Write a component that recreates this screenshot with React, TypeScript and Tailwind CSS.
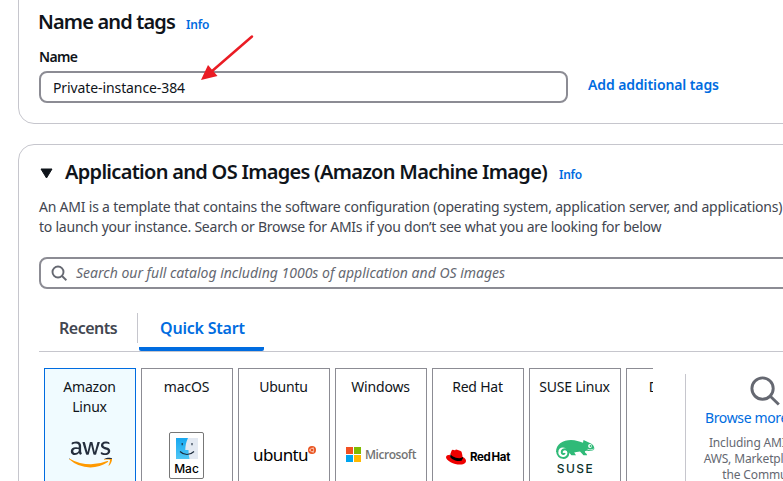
import type { ReactNode } from "react";
import { FaAws, FaRedhat } from "react-icons/fa6";

const SearchIcon = ({ size, stroke }: { size: number; stroke: number }) => (
  <svg width={size} height={size} viewBox="0 0 16 16" fill="none" stroke="#656871" strokeWidth={stroke} className="block shrink-0">
    <circle cx="7" cy="7" r="5.5" />
    <path d="M11 11l4.4 4.2" />
  </svg>
);

const AwsLogo = () => (
  <svg width="43" height="27" viewBox="0 0 43 27" className="block">
    <defs>
      <linearGradient id="aws" gradientUnits="userSpaceOnUse" x1="0" y1="0" x2="0" y2="512">
        <stop offset="0.62" stopColor="#252f3e" />
        <stop offset="0.62" stopColor="#ff9900" />
      </linearGradient>
    </defs>
    <FaAws x="0" y="-8" size="43" style={{ fill: "url(#aws)" }} />
  </svg>
);

const MacLogo = () => (
  <div className="mt-px -ml-px flex h-[47px] w-[35px] flex-col items-center rounded-[2px] border border-[#777] bg-white pt-[5px]">
    <svg width="22" height="21" viewBox="0 0 22 21" className="block shrink-0">
      <defs>
        <linearGradient id="face" x1="0" y1="0" x2="0" y2="1">
          <stop offset="0" stopColor="#18a8f0" />
          <stop offset="1" stopColor="#4fc6f5" />
        </linearGradient>
      </defs>
      <rect width="22" height="21" fill="url(#face)" />
      <path d="M12 0C10 4 9.4 8 9.3 12h3.2c0 3 .2 6 1 9H22V0z" fill="#e3e9f2" />
      <path d="M6.200 5v2.200M16 5v2.200" stroke="#1c2b3c" strokeWidth="1.1" />
      <path d="M4 13.500c4 4 10 4 14 0" stroke="#1c2b3c" strokeWidth="1.1" fill="none" />
    </svg>
    <span className="mt-[3px] font-['Inter',sans-serif] text-[12px] leading-[14px] font-medium text-black">Mac</span>
  </div>
);

const UbuntuLogo = () => (
  <div className="ml-px flex items-start">
    <span className="font-['Noto_Sans',sans-serif] text-[17px] leading-[20px] tracking-[-0.6px] text-black">ubuntu</span>
    <svg width="8" height="8" viewBox="0 0 16 16" className="mt-[1px] block">
      <circle cx="8" cy="8" r="8" fill="#e95420" />
      <circle cx="8" cy="8" r="3.6" fill="none" stroke="#fff" strokeWidth="1.1" />
      <g fill="#fff"><circle cx="3.600" cy="8" r="1.2" /><circle cx="10.200" cy="4.200" r="1.2" /><circle cx="10.200" cy="11.800" r="1.2" /></g>
    </svg>
  </div>
);

const MicrosoftLogo = () => (
  <div className="flex items-center gap-[4px]">
    <div className="grid grid-cols-2 gap-px">
      <i className="size-[7px] bg-[#f25022]" />
      <i className="size-[7px] bg-[#7fba00]" />
      <i className="size-[7px] bg-[#00a4ef]" />
      <i className="size-[7px] bg-[#ffb900]" />
    </div>
    <span className="font-['Open_Sans',sans-serif] text-[12px] leading-[16px] font-semibold tracking-[-0.45px] text-[#737373]">Microsoft</span>
  </div>
);

const RedHatLogo = () => (
  <div className="mt-[4px] flex items-center gap-[4px]">
    <svg width="20" height="16" viewBox="0 0 20 16" className="block">
      <path d="M4 5.500l1 4 6 3 6-.5V8z" fill="#000" />
      <FaRedhat x="0" y="-2" size="20" style={{ fill: "#e00" }} />
      <path d="M4.500 7.200c2 3 7.500 4.800 11.300 3.600" stroke="#000" strokeWidth="1.700" fill="none" />
    </svg>
    <span className="font-['Inter',sans-serif] text-[11.5px] leading-[14px] font-bold tracking-[-0.3px] [word-spacing:-1.5px] text-black">Red Hat</span>
  </div>
);

const SuseLogo = () => (
  <div className="mt-[5px] flex flex-col items-center">
    <svg width="39" height="20" viewBox="0 0 39 20" className="block">
      <path d="M0 13C0 5 7 1 15 1c5 0 8 1.500 12 2.800L27.500 1 35 4.500c2 1 3.500 3 3.300 5.500-1 1.800-4 2.300-7 1.800-2.300-.3-3 .5-2 2 .8 1 1.700 1 1.700 2.500h-3.500L24 12.500c-2.500.5-4.500.5-5.800 1L20 16.200h-4.500L12.500 13C10 8 4 8 3 13z" fill="#30ba78" />
      <circle cx="6.800" cy="13" r="4.500" fill="#fff" />
      <path d="M1.200 12.500c0 8 11 8.500 11.200 1.500.1-4.500-6.500-5-6.700-.8 0 2 2.500 2.400 3 .8" stroke="#30ba78" strokeWidth="2" fill="none" />
      <circle cx="34" cy="7" r="1.900" fill="#fff" />
      <circle cx="34.500" cy="7" r=".9" fill="#30ba78" />
      <path d="M31.500 10.300c2 .7 4.500.6 6.200-.3" stroke="#fff" strokeWidth=".7" fill="none" />
    </svg>
    <span className="mt-[3px] pl-[1px] font-['Inter',sans-serif] text-[12px] leading-[13px] font-medium tracking-[1.5px] text-[#0c322c]">SUSE</span>
  </div>
);

const Tile = ({ label, active, children }: { label: ReactNode; active?: boolean; children?: ReactNode }) => (
  <div className={`flex h-[140px] w-[92px] shrink-0 flex-col items-center border pt-[8px] ${active ? "border-[#006ce0] bg-[#f0fbff]" : "border-[#8c8c94] bg-white"}`}>
    <div className="h-[40px] pr-px text-center text-[14px] leading-[20px] tracking-[-0.2px] whitespace-nowrap">{label}</div>
    <div className="flex h-[75px] items-center justify-center">{children}</div>
  </div>
);

export default function App() {
  return (
    <div className="relative h-[481px] w-[783px] overflow-hidden bg-white font-['Noto_Sans',sans-serif] text-[#0f141a]">
      <div className="flex w-[1100px] flex-col gap-[20px] pl-[18px]">
        <section className="-mt-[16px] h-[140px] rounded-[16px] border border-[#c6c6cd] pt-[25px] pl-[20px]">
          <div className="flex items-baseline gap-[11px]">
            <h2 className="-ml-px text-[20px] leading-[24px] font-semibold tracking-[-0.85px]">Name and tags</h2>
            <span className="text-[12px] leading-[16px] font-semibold tracking-[-0.2px] text-[#006ce0]">Info</span>
          </div>
          <div className="mt-[13px] text-[14px] leading-[20px] font-semibold tracking-[-0.7px]">Name</div>
          <div className="mt-[4px] flex items-center gap-[20px]">
            <div className="flex h-[32px] w-[529px] items-center rounded-[8px] border-2 border-[#8c8c94] pl-[12px] text-[14px] tracking-[-0.1px]">Private-instance-384</div>
            <span className="-mt-[4px] text-[14px] leading-[20px] font-semibold tracking-[-0.1px] text-[#006ce0]">Add additional tags</span>
          </div>
        </section>

        <section className="h-[500px] rounded-[16px] border border-[#c6c6cd] pt-[15px] pl-[20px]">
          <div className="flex items-baseline">
            <svg width="13" height="11" viewBox="0 0 13 11" className="ml-[1px] block"><path d="M1 1h11L6.500 10z" fill="#0f141a" stroke="#0f141a" strokeLinejoin="round" /></svg>
            <h2 className="ml-[12px] text-[20px] leading-[24px] font-semibold tracking-[-0.7px]">Application and OS Images (Amazon Machine Image)</h2>
            <span className="ml-[12px] text-[12px] leading-[16px] font-semibold tracking-[-0.2px] text-[#006ce0]">Info</span>
          </div>
          <p className="mt-[13px] text-[14px] leading-[20px] whitespace-nowrap text-[#424650]">
            <span className="tracking-[-0.215px]">An AMI is a template that contains the software configuration (operating system, application server, and applications)</span>
            <br />
            <span className="tracking-[-0.23px]">to launch your instance. Search or Browse for AMIs if you don’t see what you are looking for below</span>
          </p>
          <div className="mt-[20px] flex h-[32px] items-center gap-[9px] rounded-[8px] border-2 border-[#8c8c94] pl-[10px]">
            <SearchIcon size={16} stroke={1.9} />
            <span className="text-[14px] leading-[20px] text-[#656871] italic">Search our full catalog including 1000s of application and OS images</span>
          </div>
          <div className="mt-[25px] flex h-[38px] border-b border-[#c6c6cd]">
            <div className="-mt-[1px] h-[30px] w-[99px] border-r border-[#c6c6cd] pt-[5px] pl-[20px] text-[16px] leading-[20px] font-semibold tracking-[-0.5px] text-[#424650]">Recents</div>
            <div className="ml-[1px] h-[37px] w-[125px] rounded-b-[2px] border-b-4 border-[#006ce0] pt-[4px] pl-[21px] text-[16px] leading-[20px] font-semibold tracking-[-0.2px] text-[#006ce0]">Quick Start</div>
          </div>
          <div className="mt-[16px] flex">
            <div className="ml-[5px] flex w-[609px] gap-[5px] overflow-hidden">
              <Tile active label={<>Amazon<br />Linux</>}><AwsLogo /></Tile>
              <Tile label="macOS"><MacLogo /></Tile>
              <Tile label="Ubuntu"><UbuntuLogo /></Tile>
              <Tile label="Windows"><MicrosoftLogo /></Tile>
              <Tile label="Red Hat"><RedHatLogo /></Tile>
              <Tile label="SUSE Linux"><SuseLogo /></Tile>
              <Tile label="Debian" />
            </div>
            <div className="mt-[6px] ml-[32px] flex h-[130px] w-[157px] flex-col items-center border-l border-[#c6c6cd] pt-[1px]">
              <SearchIcon size={31} stroke={1.5} />
              <div className="mt-[2px] text-[14px] leading-[20px] tracking-[-0.35px] whitespace-nowrap text-[#006ce0]">Browse more AMIs</div>
              <div className="mt-[7px] pl-[2px] text-center text-[12px] leading-[16px] tracking-[-0.15px] whitespace-nowrap text-[#656871]">Including AMIs from<br />AWS, Marketplace and<br />the Community</div>
            </div>
          </div>
        </section>
      </div>
      <svg width="56" height="50" viewBox="0 0 56 50" className="pointer-events-none absolute top-[33px] left-[199px]">
        <path d="M53 3.500L12 39" stroke="#ea1c24" strokeWidth="2.500" strokeLinecap="round" />
        <path d="M2 47L9 32L18.500 43z" fill="#ea1c24" />
      </svg>
    </div>
  );
}
